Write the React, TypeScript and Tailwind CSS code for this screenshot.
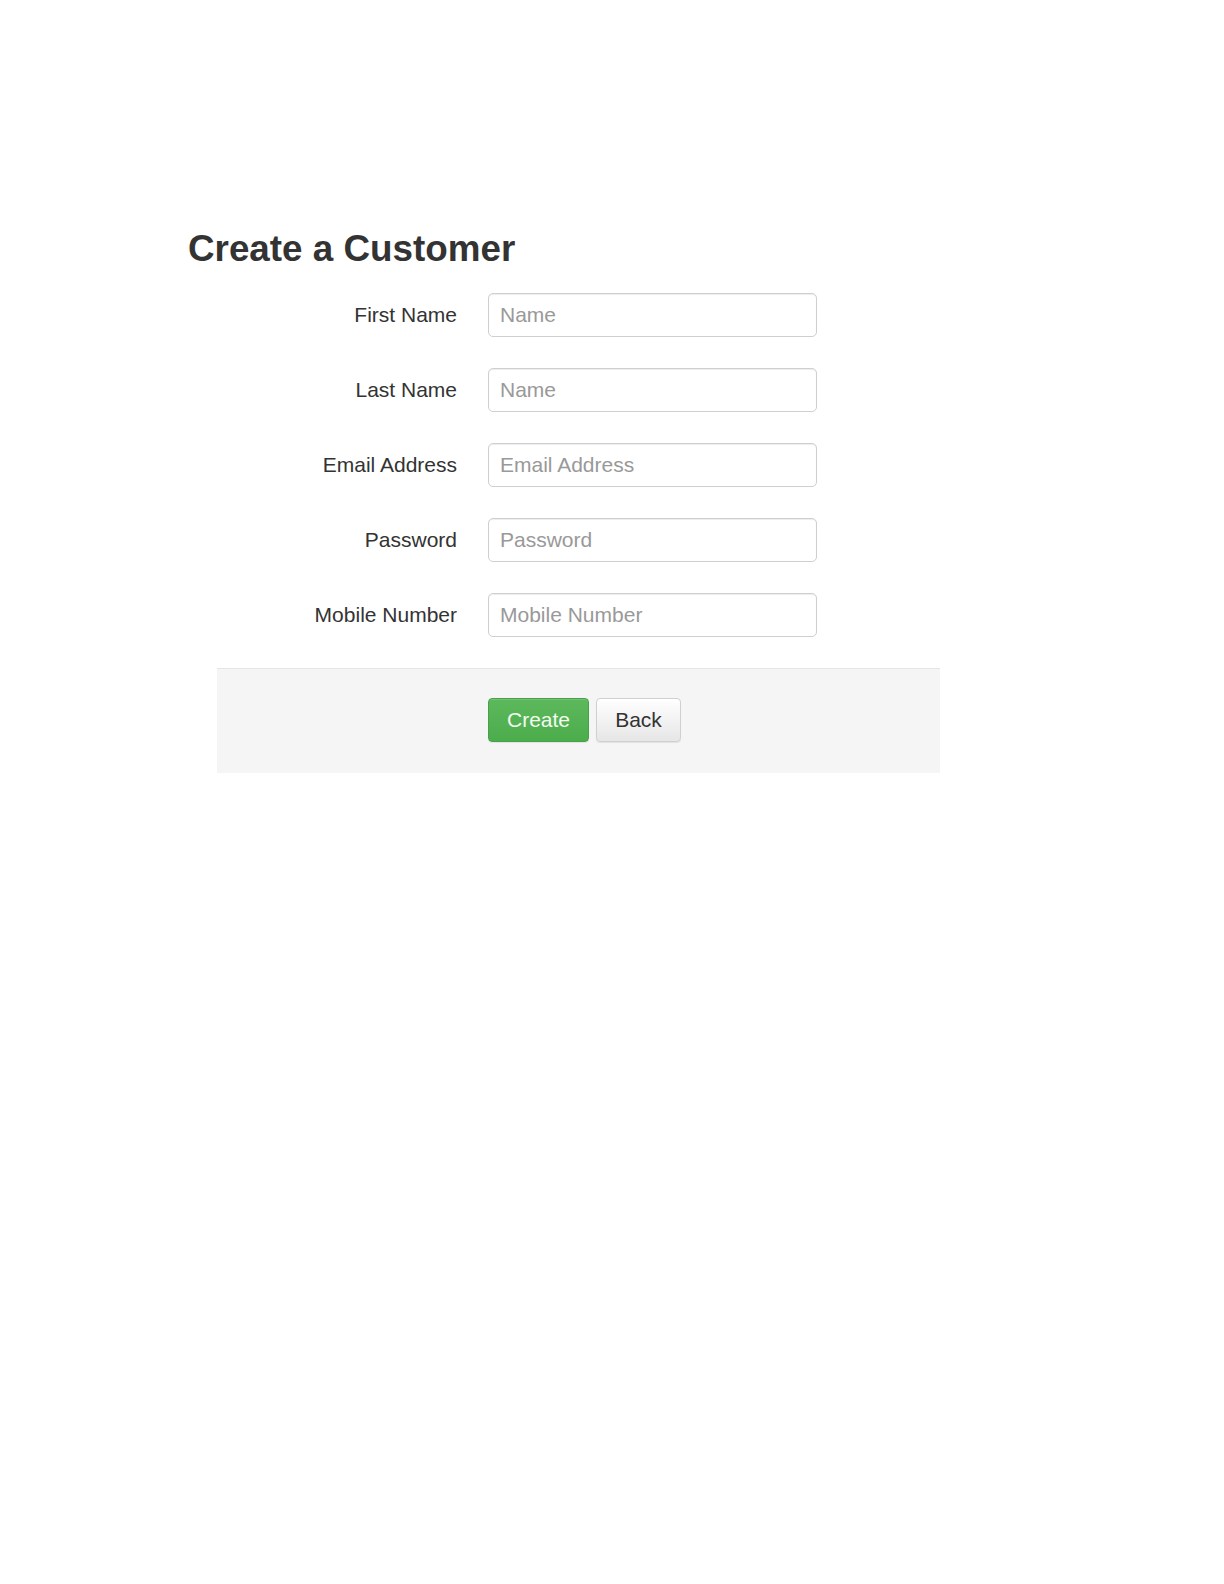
const fields = [
  { label: "First Name", placeholder: "Name", type: "text" },
  { label: "Last Name", placeholder: "Name", type: "text" },
  { label: "Email Address", placeholder: "Email Address", type: "email" },
  { label: "Password", placeholder: "Password", type: "password" },
  { label: "Mobile Number", placeholder: "Mobile Number", type: "text" },
];

export default function App() {
  return (
    <div className="min-h-screen bg-white pt-[227px] font-['Liberation_Sans',Arial,sans-serif] text-[#333]">
      <h1 className="ml-[188px] text-[36.8px] font-bold leading-[44px]">Create a Customer</h1>

      <form className="ml-[217px] mt-[22px] w-[723px]">
        <div className="flex flex-col gap-[31px]">
          {fields.map((f) => (
            <div key={f.label} className="grid grid-cols-[240px_329px] items-center gap-x-[31px]">
              <label className="text-right text-[21px] leading-[24px]">{f.label}</label>
              <input
                type={f.type}
                placeholder={f.placeholder}
                className="h-[44px] w-[329px] rounded-[5px] border border-[#cfcfcf] bg-white px-[11px] text-[21px] text-[#555] shadow-[inset_0_1px_1px_rgba(0,0,0,0.075)] outline-none placeholder:text-[#999]"
              />
            </div>
          ))}
        </div>

        <div className="mt-[31px] border-t border-[#e5e5e5] bg-[#f5f5f5] pb-[31px] pl-[271px] pt-[29px]">
          <div className="flex gap-[7px]">
            <button
              type="button"
              className="h-[44px] w-[101px] rounded-[4px] border border-[#48a048] bg-[linear-gradient(to_bottom,#5cb85c,#4cad4c)] text-[21px] text-[#f4fbf0] shadow-[inset_0_1px_0_rgba(255,255,255,0.15),0_1px_1px_rgba(0,0,0,0.075)]"
            >
              Create
            </button>
            <button
              type="button"
              className="h-[44px] w-[85px] rounded-[4px] border border-[#d0d0d0] bg-[linear-gradient(to_bottom,#fff,#e6e6e6)] text-[21px] text-[#333] shadow-[inset_0_1px_0_rgba(255,255,255,0.15),0_1px_1px_rgba(0,0,0,0.075)]"
            >
              Back
            </button>
          </div>
        </div>
      </form>
    </div>
  );
}
